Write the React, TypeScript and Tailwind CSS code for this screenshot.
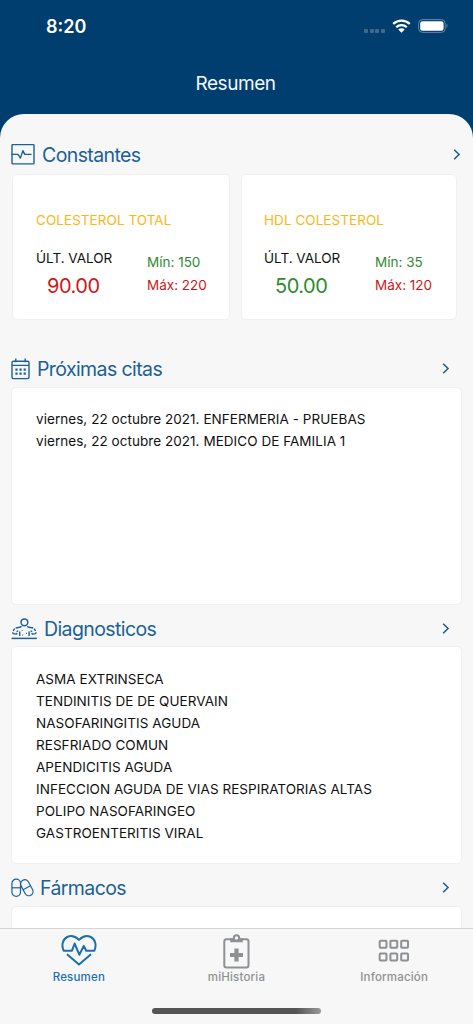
import React from "react";

type IconProps = { className?: string };

const VitalsIcon = () => (
  <svg width="24" height="22" viewBox="0 0 24 22" fill="none" stroke="currentColor" strokeWidth="1.4" strokeLinejoin="round">
    <rect x="1" y="0.6" width="22" height="19.3" rx="0.8" />
    <path d="M1 10.4h6l2.4 3.7 2.5-7.5 1.8 3.8H20" strokeLinecap="round" />
  </svg>
);

const CalendarIcon = () => (
  <svg width="19" height="22" viewBox="0 0 19 22" fill="none" stroke="currentColor" strokeWidth="1.4" strokeLinejoin="round">
    <rect x="1" y="3.2" width="17" height="17.4" rx="1.6" />
    <path d="M1 7.4h17M4.8 0.4v3.8M14.2 0.4v3.8" />
    <path d="M4.4 11.6h2.2m1.9 0h2.2m1.9 0h2.2M4.4 15.6h2.2m1.9 0h2.2m1.9 0h2.2" strokeWidth="2.4" />
  </svg>
);

const PatientIcon = () => (
  <svg width="26" height="22" viewBox="0 0 26 22" fill="none" stroke="currentColor" strokeWidth="1.4" strokeLinejoin="round">
    <circle cx="13.4" cy="4.3" r="3.4" strokeWidth="1.5" />
    <path d="M0.6 20.4h25.2" strokeWidth="1.5" />
    <path d="M10.6 8.4 8.8 9.3 4.6 10M16.2 8.4l1.8.9 4.2.7" />
    <path d="M3.6 10.7 2.2 13M23.2 10.7l1.4 2.300" />
    <path d="M1.700 14.200c0 1.200.6 1.600 1.600 1.700l2.300.2.400-1M25.100 14.200c0 1.200-.6 1.600-1.600 1.700l-2.300.2-.4-1" />
    <path d="M5.600 13.600 7.200 12.900M21.200 13.600l-1.600-.7M8.700 13.400v4.600M18.100 13.400v4.600" />
    <path d="M11.200 12v1M15.500 14.800v1M11.200 17h1" strokeWidth="1" />
  </svg>
);

const PillsIcon = () => (
  <svg width="23" height="20" viewBox="0 0 23 20" fill="none" stroke="currentColor" strokeWidth="1.2">
    <rect x="0.9" y="1.2" width="8.6" height="17.2" rx="4.3" />
    <path d="M0.9 9.8h8.6" />
    <g transform="rotate(-28 15.6 9.6)">
      <rect x="11.5" y="1.3" width="8.4" height="17" rx="4.2" />
      <path d="M11.5 9.8h8.4" />
    </g>
  </svg>
);

const HeartIcon = () => (
  <svg width="36" height="32" viewBox="0 0 36 32" fill="none" stroke="currentColor" strokeWidth="2" strokeLinejoin="round">
    <path d="M2.6 16.7C.4 11.6 1.3 5.5 6.2 3c4-2 8.3-.6 11.8 2.9 3.5-3.5 7.800-4.900 11.800-2.900 4.900 2.500 5.800 8.600 3.600 13.700H25.200l-2.400-4.800-4.500 8.800-4.700-11.200-2.600 7.200H2.600z" />
    <path d="M6 20.3 18 30.6l12-10.3" />
  </svg>
);

const ClipboardIcon = () => (
  <svg width="27" height="35" viewBox="0 0 27 35" fill="none" stroke="currentColor" strokeWidth="2">
    <rect x="1.3" y="5.200" width="24.2" height="28.3" rx="2.2" />
    <path d="M7.2 4.2h3.2a3.2 3.2 0 0 1 6.2 0h3.200v4H7.200z" fill="currentColor" stroke="none" />
    <circle cx="13.5" cy="3.9" r="2.7" fill="#f7f7f7" strokeWidth="2" />
    <path d="M13.5 14.5v13M7 21h13" strokeWidth="4.2" />
  </svg>
);

const GridIcon = () => (
  <svg width="32" height="24" viewBox="0 0 32 24" fill="none" stroke="currentColor" strokeWidth="2">
    <rect x="1.7" y="1.7" width="6.8" height="7" rx="0.8" />
    <rect x="12.4" y="1.7" width="6.8" height="7" rx="0.8" />
    <rect x="23.2" y="1.7" width="6.8" height="7" rx="0.8" />
    <rect x="1.7" y="14.6" width="6.8" height="7" rx="0.8" />
    <rect x="12.4" y="14.6" width="6.8" height="7" rx="0.8" />
    <rect x="23.2" y="14.6" width="6.8" height="7" rx="0.8" />
  </svg>
);

const Chevron = ({ className }: IconProps) => (
  <svg className={className} width="8" height="12" viewBox="0 0 8 12" fill="none" stroke="currentColor" strokeWidth="1.6">
    <path d="M1.2 0.7 6 5.5 1.2 10.3" />
  </svg>
);

const StatusBar = () => (
  <div className="flex h-[52px] items-center justify-between pl-[46px] pr-[24px] text-white">
    <span className="pt-[2px] text-[18px] font-semibold leading-none">8:20</span>
    <div className="flex items-center">
      <div className="mr-[7px] mt-[9px] flex gap-[1.7px]">
        <i className="size-[4px] rounded-[1px] bg-[#41698f]" />
        <i className="size-[4px] rounded-[1px] bg-[#41698f]" />
        <i className="size-[4px] rounded-[1px] bg-[#41698f]" />
        <i className="size-[4px] rounded-[1px] bg-[#41698f]" />
      </div>
      <svg className="mr-[7px]" width="19" height="14" viewBox="0 0 19 14" fill="none" stroke="currentColor" strokeWidth="2.3">
        <path d="M1.2 4.9a12 12 0 0 1 16.6 0M4.2 8.2a7.6 7.6 0 0 1 10.6 0" />
        <path d="M9.5 13.7 6.3 10.5a4.6 4.6 0 0 1 6.4 0z" fill="currentColor" stroke="none" />
      </svg>
      <svg width="31" height="14" viewBox="0 0 31 14" fill="none">
        <rect x="0.6" y="0.6" width="26.6" height="12.8" rx="3.8" stroke="#6685a5" strokeWidth="1" />
        <rect x="2.2" y="2.2" width="23.4" height="9.6" rx="2.2" fill="#fff" />
        <path d="M28.5 4.8v4.4c1.4-.6 1.4-3.8 0-4.4z" fill="#6685a5" />
      </svg>
    </div>
  </div>
);

type HeadingProps = {
  icon: React.ReactNode;
  title: string;
  className: string;
};

const SectionHeading = ({ icon, title, className }: HeadingProps) => (
  <div className={`flex items-center text-[#1b6196] ${className}`}>
    {icon}
    <h2 className="text-[19.5px] leading-6 tracking-[-0.6px]">{title}</h2>
    <Chevron className="ml-auto" />
  </div>
);

type MeasureProps = {
  name: string;
  value: string;
  valueColor: string;
  min: string;
  max: string;
  className: string;
};

const MeasureCard = ({ name, value, valueColor, min, max, className }: MeasureProps) => (
  <div className={`h-[146px] rounded-[5px] border border-[#f0f0f0] bg-white pt-[34px] ${className}`}>
    <h3 className="text-[13.5px] leading-[22px] tracking-[0.05px] text-[#fdb714]">{name}</h3>
    <div className="mt-[16px] flex">
      <div className="w-[111px]">
        <p className="text-[13.5px] leading-[22px]">ÚLT. VALOR</p>
        <p className={`pl-[11px] pt-[4px] text-[20px] leading-[26px] tracking-[-0.5px] ${valueColor}`}>{value}</p>
      </div>
      <div className="pt-[4px] text-[13.5px] leading-[23px]">
        <p className="text-[#2e8b2e]">Mín: {min}</p>
        <p className="text-[#cd1719]">Máx: {max}</p>
      </div>
    </div>
  </div>
);

const ListCard = ({ items, className = "" }: { items: string[]; className?: string }) => (
  <ul className={`h-[218px] rounded-[5px] border border-[#f0f0f0] bg-white pl-[24px] text-[13.5px] leading-[22px] tracking-[0.05px] ${className}`}>
    {items.map((item) => (
      <li key={item}>{item}</li>
    ))}
  </ul>
);

const appointments = [
  "viernes, 22 octubre 2021. ENFERMERIA - PRUEBAS",
  "viernes, 22 octubre 2021. MEDICO DE FAMILIA 1",
];

const diagnoses = [
  "ASMA EXTRINSECA",
  "TENDINITIS DE DE QUERVAIN",
  "NASOFARINGITIS AGUDA",
  "RESFRIADO COMUN",
  "APENDICITIS AGUDA",
  "INFECCION AGUDA DE VIAS RESPIRATORIAS ALTAS",
  "POLIPO NASOFARINGEO",
  "GASTROENTERITIS VIRAL",
];

const TabBar = () => (
  <nav className="h-24 border-t border-[#d6d6d7] bg-[#f7f7f7]">
    <div className="grid h-[79px] grid-cols-3 text-center text-[11.5px] font-medium leading-[16px] tracking-[0.18px] text-[#8e9093]">
      <a href="#" className="flex flex-col items-center text-[#1b70ac]">
        <span className="flex h-[40px] items-end pb-[3px]"><HeartIcon /></span>
        Resumen
      </a>
      <a href="#" className="flex flex-col items-center">
        <span className="flex h-[40px] items-end"><ClipboardIcon /></span>
        miHistoria
      </a>
      <a href="#" className="flex flex-col items-center">
        <span className="flex h-[40px] items-end pb-[6px]"><GridIcon /></span>
        Información
      </a>
    </div>
    <div className="mx-auto h-[6px] w-[169px] rounded-full bg-linear-to-r from-[#555] from-85% to-[#999]" />
  </nav>
);

const App = () => (
  <div className="flex h-[1024px] w-[473px] flex-col overflow-hidden bg-[#003e70] font-[Inter,sans-serif] text-[#111]">
    <header className="h-[114px] shrink-0">
      <StatusBar />
      <h1 className="pt-[20px] pr-[2px] text-center text-[19px] leading-6 tracking-[-0.45px] text-[#f4f7fa]">Resumen</h1>
    </header>

    <main className="min-h-0 flex-1 overflow-hidden rounded-t-[24px] bg-[#f7f7f7]">
      <SectionHeading icon={<VitalsIcon />} title="Constantes" className="mt-[29px] gap-[7px] pl-[11px] pr-[12px]" />
      <div className="mt-[7px] grid grid-cols-[218px_216px] gap-[11px] pl-[12px]">
        <MeasureCard name="COLESTEROL TOTAL" value="90.00" valueColor="text-[#cd1719]" min="150" max="220" className="pl-[23px]" />
        <MeasureCard name="HDL COLESTEROL" value="50.00" valueColor="text-[#2e8b2e]" min="35" max="120" className="pl-[22px]" />
      </div>

      <SectionHeading icon={<CalendarIcon />} title="Próximas citas" className="mt-[37px] gap-[7px] pl-[11px] pr-[23px]" />
      <div className="mt-[6px] px-[11px]">
        <ListCard items={appointments} className="pt-[20px]" />
      </div>

      <SectionHeading icon={<PatientIcon />} title="Diagnosticos" className="mt-3 gap-[7px] pl-[11px] pr-[23px]" />
      <div className="mt-[5px] px-[11px]">
        <ListCard items={diagnoses} className="pt-[21px]" />
      </div>

      <SectionHeading icon={<PillsIcon />} title="Fármacos" className="mt-3 gap-[6px] pl-[11px] pr-[23px]" />
      <div className="mt-[6px] px-[11px]">
        <ListCard items={[]} />
      </div>
    </main>

    <TabBar />
  </div>
);

export default App;
